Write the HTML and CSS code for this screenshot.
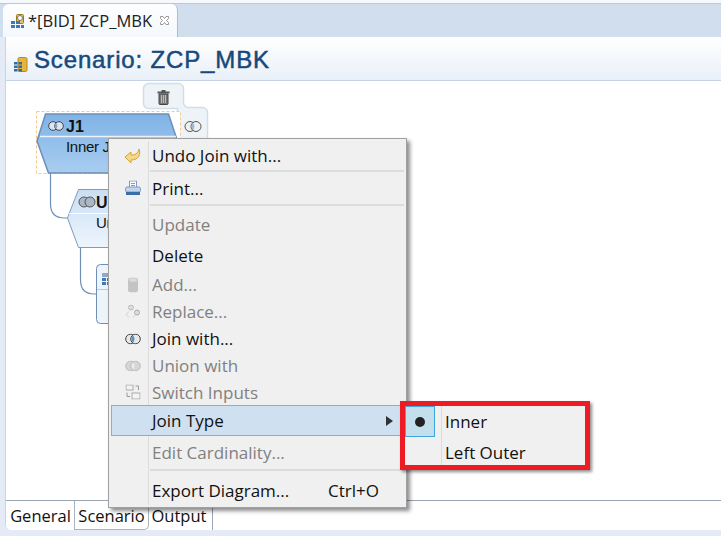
FILE: index.html
```html
<!DOCTYPE html>
<html lang="en">
<head>
  <meta charset="UTF-8" />
  <title>Scenario: ZCP_MBK</title>
  <link rel="stylesheet" href="styles.css">
</head>
<body>
  <div class="tabbar">
    <div class="tab">
      <svg class="tab-icon" width="15" height="16" viewBox="0 0 15 16">
        <rect x="6.500" y="1.500" width="7" height="9" rx="1" fill="#e8c860" stroke="#a07a20"/>
        <circle cx="10" cy="5" r="2.500" fill="#fff" stroke="#777"/>
        <path d="M1 8h4v3H1zM6 8h4v3H6zM1 12h4v3H1zM6 12h4v3H6zM11 12h3v3h-3z" fill="#3f78b5"/>
      </svg>
      <span>*[BID] ZCP_MBK</span>
      <svg class="tab-close" width="11" height="11" viewBox="0 0 11 11">
        <path d="M1.500 1.500 L4 1.500 L5.500 3.500 L7 1.500 L9.500 1.500 L9.500 3.500 L7.500 5.500 L9.500 7.500 L9.500 9.500 L7 9.500 L5.500 7.500 L4 9.500 L1.500 9.500 L1.500 7.500 L3.500 5.500 L1.500 3.500 Z" fill="#fff" stroke="#999"/>
      </svg>
    </div>
  </div>

  <div class="editor">
    <div class="editor-head">
      <svg width="15" height="15" viewBox="0 0 15 15">
        <rect x="5" y=".5" width="9" height="14" rx="1.500" fill="#e5b53f" stroke="#b98a1e"/>
        <path d="M1 5h3.500v2.500H1zM5.500 5H9v2.500H5.500zM1 8.500h3.500V11H1zM5.500 8.500H9V11H5.500zM1 12h3.500v2.500H1zM5.500 12H9v2.500H5.500z" fill="#2f6ca8"/>
      </svg>
      <h1>Scenario: ZCP_MBK</h1>
    </div>

    <div class="canvas">
      <svg class="links" width="300" height="300" viewBox="0 0 300 300">
        <defs>
          <linearGradient id="blue" x1="0" y1="0" x2="0" y2="1">
            <stop offset="0" stop-color="#7fb3e6"/>
            <stop offset="1" stop-color="#a9cdf0"/>
          </linearGradient>
          <linearGradient id="pale" x1="0" y1="0" x2="0" y2="1">
            <stop offset="0" stop-color="#c9def4"/>
            <stop offset="1" stop-color="#eef5fc"/>
          </linearGradient>
        </defs>
        <!-- palette behind the selected node -->
        <path d="M137.500 7.500 a5 5 0 0 1 5 -5 h30 a5 5 0 0 1 5 5 v14 a5 5 0 0 0 5 5 h14 a5 5 0 0 1 5 5 v40 h-30 V27.500 H142.500 a5 5 0 0 1 -5 -5 z" fill="#eef3f8" stroke="#d3dde8" stroke-width="1.500"/>
        <rect x="30.500" y="30.500" width="144" height="62" fill="#fff" stroke="#f5c88c" stroke-dasharray="3 2"/>
        <!-- connectors -->
        <path d="M44.500 92 v31 q0 14 14 14 h4" fill="none" stroke="#6d8fb5" stroke-width="1.200"/>
        <path d="M74.500 167 v32 q0 14 14 14 h3" fill="none" stroke="#6d8fb5" stroke-width="1.200"/>
        <!-- J1 -->
        <path d="M39.500 33 h123 l8 24 v35 h-128 l-11.500 -32 z" fill="url(#blue)" stroke="#6d8fb5" stroke-width="1.500"/>
        <path d="M34 55.500 h136" stroke="#eaf2fb" stroke-width="1.500"/>
        <!-- U -->
        <path d="M72.500 108.500 h102 v58 h-102 l-11 -29.500 z" fill="url(#pale)" stroke="#7f9cc0"/>
        <path d="M63 132.500 h112" stroke="#fff"/>
        <!-- table node -->
        <rect x="90.500" y="183.500" width="50" height="59" rx="4" fill="#edf4fb" stroke="#6d8fb5"/>
        <path d="M91 208.500 h50" stroke="#b5c9e0"/>
        <path d="M96 192h14v4H96z" fill="#8fa9c6"/>
        <path d="M96 197h4v3h-4zM101 197h4v3h-4zM106 197h4v3h-4zM96 201h4v3h-4zM101 201h4v3h-4z" fill="#3f78b5"/>
      </svg>

      <svg class="glyph g-trash" width="13" height="15" viewBox="0 0 13 15">
        <rect x=".5" y="1.500" width="12" height="2" fill="#555"/>
        <rect x="4.500" y="0" width="4" height="2" fill="#555"/>
        <path d="M2 4 h9 v9.500 a1 1 0 0 1 -1 1 h-7 a1 1 0 0 1 -1 -1 z" fill="#777" stroke="#444"/>
        <path d="M4.500 5 v8 M6.500 5 v8 M8.500 5 v8" stroke="#bbb"/>
      </svg>
      <svg class="glyph g-j1" width="16" height="10" viewBox="0 0 16 10"><circle cx="5" cy="5" r="4.300" fill="#dfe6ee" stroke="#444"/><circle cx="11" cy="5" r="4.300" fill="#dfe6ee" stroke="#444"/><path d="M8 2 a4 4 0 0 1 0 6 a4 4 0 0 1 0 -6" fill="#7fa3cc"/></svg>
      <svg class="glyph g-side" width="18" height="11" viewBox="0 0 18 11"><circle cx="6" cy="5.500" r="5" fill="#eef0f2" stroke="#555"/><circle cx="12" cy="5.500" r="5" fill="#eef0f2" stroke="#555"/><path d="M9 2 a5 5 0 0 1 0 7 a5 5 0 0 1 0 -7" fill="#9db9d8"/></svg>
      <svg class="glyph g-u" width="18" height="12" viewBox="0 0 18 12"><circle cx="6" cy="6" r="5" fill="#aab7c6" stroke="#555"/><circle cx="12" cy="6" r="5" fill="#aab7c6" stroke="#555"/></svg>

      <b class="label l-j1">J1</b>
      <span class="label l-inner">Inner Join</span>
      <b class="label l-u">U1</b>
      <span class="label l-union">Union</span>
    </div>

    <div class="bottom-tabs">
      <div class="btab tab-general">General</div>
      <div class="btab tab-scenario">Scenario</div>
      <div class="btab tab-output">Output</div>
    </div>
  </div>

  <div class="menu">
    <div class="row h29">
      <svg class="ico" width="18" height="16" viewBox="0 0 18 16"><path d="M1 9 L7 4 V7 C11 7 14 6 15 1 C17 6 15 12 7 12 V15 Z" fill="#f5d98a" stroke="#d4a23c"/></svg>
      <span>Undo Join with...</span>
    </div>
    <hr>
    <div class="row h32">
      <svg class="ico" width="16" height="15" viewBox="0 0 16 15"><rect x="4.500" y=".5" width="7" height="7" fill="#fff" stroke="#7b9cc4"/><path d="M6 3h4M6 5h4" stroke="#7b9cc4"/><rect x=".5" y="6.500" width="15" height="5" rx="1.500" fill="#c3d4e8" stroke="#7b9cc4"/><rect x="1" y="11.500" width="14" height="3" fill="#3a6ea8"/></svg>
      <span>Print...</span>
    </div>
    <hr>
    <div class="row h34 off low"><span>Update</span></div>
    <div class="row h31"><span>Delete</span></div>
    <div class="row off">
      <svg class="ico" width="10" height="15" viewBox="0 0 10 15"><rect width="10" height="15" rx="3" fill="#c4c4c4"/><ellipse cx="5" cy="2.500" rx="4" ry="1.800" fill="#dcdcdc"/></svg>
      <span>Add...</span>
    </div>
    <div class="row off">
      <svg class="ico" width="16" height="15" viewBox="0 0 16 15"><circle cx="6" cy="3" r="2.500" fill="#ddd" stroke="#bbb"/><circle cx="12" cy="8" r="2.500" fill="#ddd" stroke="#aaa"/><path d="M4 7 L1 10 L4 13 M8 13 L10 11" fill="none" stroke="#ccc"/></svg>
      <span>Replace...</span>
    </div>
    <div class="row">
      <svg class="ico" width="16" height="11" viewBox="0 0 16 11"><circle cx="5.500" cy="5.500" r="4.800" fill="#e8e8e8" stroke="#444"/><circle cx="10.500" cy="5.500" r="4.800" fill="#e8e8e8" stroke="#444"/><path d="M8 2 a4.800 4.800 0 0 1 0 7 a4.800 4.800 0 0 1 0 -7" fill="#5b8fc7"/></svg>
      <span>Join with...</span>
    </div>
    <div class="row off">
      <svg class="ico" width="16" height="11" viewBox="0 0 16 11"><circle cx="5.500" cy="5.500" r="4.800" fill="#d6d6d6" stroke="#bbb"/><circle cx="10.500" cy="5.500" r="4.800" fill="#d6d6d6" stroke="#bbb"/><path d="M8 2 a4.800 4.800 0 0 1 0 7 a4.800 4.800 0 0 1 0 -7" fill="#ececec"/></svg>
      <span>Union with</span>
    </div>
    <div class="row h26 off">
      <svg class="ico" width="15" height="15" viewBox="0 0 15 15"><rect x=".5" y=".5" width="7" height="5" fill="#f4f4f4" stroke="#aaa"/><rect x="6.500" y="8.500" width="8" height="6" fill="#f4f4f4" stroke="#aaa"/><path d="M10 1.500 h3 v4 M1.500 8 v4 h3" fill="none" stroke="#999"/></svg>
      <span>Switch Inputs</span>
    </div>
    <div class="row h31 current">
      <span>Join Type</span>
      <i class="arrow"></i>
    </div>
    <div class="row h33 off"><span>Edit Cardinality...</span></div>
    <hr>
    <div class="row h36 low">
      <span>Export Diagram...</span>
      <kbd>Ctrl+O</kbd>
    </div>
  </div>

  <div class="submenu">
    <div class="sub-row h31">
      <div class="check"><i></i></div>
      <span>Inner</span>
    </div>
    <div class="sub-row low">
      <div class="check blank"></div>
      <span>Left Outer</span>
    </div>
  </div>
</body>
</html>
```

FILE: styles.css
```css
html, body { margin: 0; height: 100%; }
body { width: 721px; height: 536px; position: relative; overflow: hidden; background: linear-gradient(#f6f8fc 3px, #e4ebf6 3px); font-family: "Open Sans", "Noto Sans", Arial, sans-serif; display: flex; flex-direction: column; }

.tabbar { height: 34px; margin-top: 3px; background: #d0deee; border-top: 1px solid #bcc9da; padding-left: 3px; display: flex; box-sizing: border-box; }
.tab { width: 175px; height: 33px; background: linear-gradient(#fdfeff, #f4f8fc); border-radius: 6px 6px 0 0; border-right: 1px solid #a9bdd4; box-sizing: border-box; display: flex; align-items: center; padding-left: 7px; font-size: 16.500px; color: #222; }
.tab span { margin-left: 3px; white-space: nowrap; }
.tab-close { margin-left: 7px; }

.editor { flex: 1; margin: 0 0 6px 5px; background: #fff; display: flex; flex-direction: column; border-radius: 0 0 0 6px; border-left: 1px solid #c8d4e2; }
.editor-head { height: 44px; box-sizing: border-box; background: linear-gradient(#fff, #e9f0f8); border-bottom: 1px solid #c5d3e4; display: flex; align-items: flex-end; padding: 0 0 8px 7px; }
.editor-head h1 { margin: 0 0 -2px 6px; font: 400 24px "Liberation Sans", Arial, sans-serif; letter-spacing: .85px; color: #17497c; -webkit-text-stroke: .5px #17497c; }

.canvas { flex: 1; position: relative; border-bottom: 1px solid #9aa5b1; }
.links { position: absolute; left: 0; top: 0; }
.glyph { position: absolute; }
.g-trash { left: 151px; top: 9px; }
.g-j1 { left: 42px; top: 40px; }
.g-side { left: 178px; top: 40px; }
.g-u { left: 72px; top: 115px; }

.label { position: absolute; font-size: 15px; letter-spacing: -.3px; color: #111; white-space: nowrap; font-family: "Liberation Sans", Arial, sans-serif; }
.label.l-j1, .label.l-u { font-size: 16px; letter-spacing: 0; }
.l-j1 { left: 60px; top: 37px; }
.l-inner { left: 60px; top: 57px; }
.l-u { left: 90px; top: 113px; }
.l-union { left: 90px; top: 133px; }

.bottom-tabs { height: 29px; display: flex; font-size: 16.500px; color: #111; }
.btab { padding: 3px 0 0; box-sizing: border-box; text-align: center; height: 29px; }
.tab-general { width: 69px; padding-left: 1px; background: #fff; border-right: 1px solid #aab4c0; border-radius: 0 0 0 5px; }
.tab-scenario { width: 74px; background: #fff; border-right: 1px solid #aab4c0; border-bottom: 1px solid #aab4c0; border-radius: 0 0 5px 0; }
.tab-output { width: 64px; padding-right: 3px; border-right: 1px solid #9aa5b1; }

.menu { position: absolute; left: 108px; top: 138px; width: 299px; height: 370px; box-sizing: border-box; background: #f0f0f0; border: 1px solid #a0a0a0; padding: 2px; box-shadow: 3px 3px 4px rgba(0,0,0,.45); font-size: 17px; color: #111; }
.menu::before { content: ""; position: absolute; left: 39px; top: 2px; bottom: 2px; border-left: 1px solid #dcdcdc; }
.row { height: 27px; position: relative; display: flex; align-items: center; padding-left: 41px; white-space: nowrap; box-sizing: border-box; }
.row.h26 { height: 26px; }
.row.h29 { height: 29px; }
.row.h31 { height: 31px; }
.row.h32 { height: 32px; }
.row.h33 { height: 33px; }
.row.h34 { height: 34px; }
.row.h36 { height: 36px; }
.row.low { padding-top: 3px; }
.row.off { color: #6d6d6d; }
.row.off span { opacity: .85; }
.row.current { background: #cfe0f1; border: 1px solid #7fb0e0; padding-left: 40px; }
.ico { position: absolute; left: 22px; top: 50%; transform: translate(-50%, -50%); }
.arrow { position: absolute; right: 10px; top: 10px; border-left: 7px solid #333; border-top: 5px solid transparent; border-bottom: 5px solid transparent; }
kbd { position: absolute; left: 217px; font: inherit; }
.menu hr { margin: 0 0 0 39px; border: 0; border-top: 2px solid #dcdcdc; }

.submenu { position: absolute; left: 400px; top: 401px; width: 190px; height: 69px; box-sizing: border-box; background: #f0f0f0; border: 5px solid #ed1c24; box-shadow: 2px 2px 3px rgba(0,0,0,.45); font-size: 17px; color: #111; }
.submenu::before { content: ""; position: absolute; left: 36px; top: 0; bottom: 0; border-left: 1px solid #dcdcdc; }
.sub-row { height: 28px; display: flex; align-items: center; }
.sub-row.h31 { height: 31px; }
.sub-row.low { padding-top: 3px; box-sizing: border-box; height: 28px; }
.sub-row span { margin-left: 10px; }
.check { width: 30px; height: 100%; box-sizing: border-box; background: #c3dfec; border: 1px solid #3ea6dc; display: flex; align-items: center; justify-content: center; }
.check.blank { background: none; border: 0; }
.check i { width: 10px; height: 10px; border-radius: 50%; background: #222; }
```
